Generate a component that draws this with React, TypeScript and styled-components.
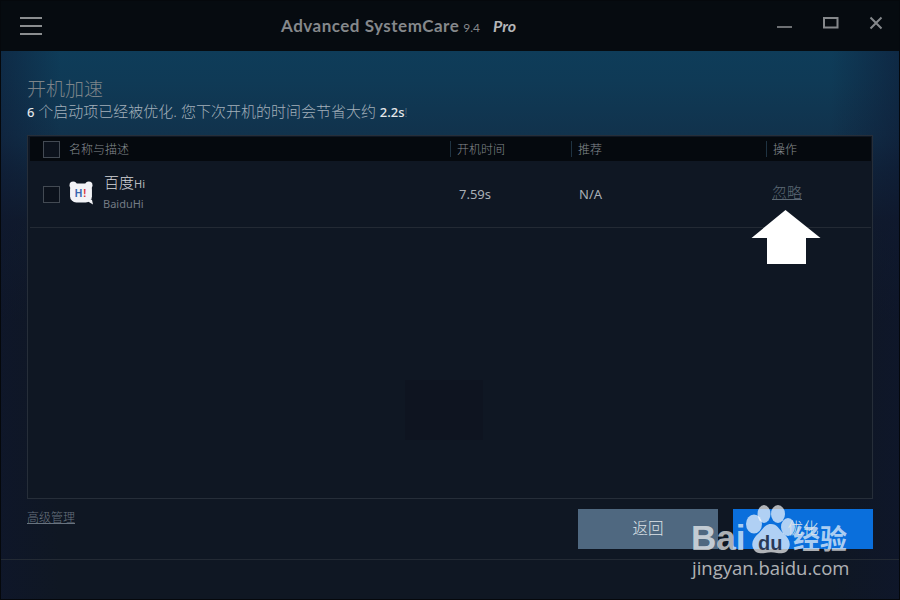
import React, { FC } from 'react';
import styled, { createGlobalStyle } from 'styled-components';

const FONT = '"Noto Sans", "Noto Sans CJK SC", sans-serif';

const GlobalStyle = createGlobalStyle`
  html, body {
    margin: 0;
    padding: 0;
    background: #05080c;
  }
  body {
    font-family: ${FONT};
  }
`;

const Window = styled.div`
  position: relative;
  width: 900px;
  height: 600px;
  box-sizing: border-box;
  border: 1px solid #05080c;
  overflow: hidden;
  display: flex;
  flex-direction: column;
  background:
    linear-gradient(
      90deg,
      rgba(14, 22, 48, 0.45) 0,
      rgba(14, 22, 48, 0) 60px,
      rgba(14, 22, 48, 0) 830px,
      rgba(14, 22, 48, 0.5) 100%
    ),
    linear-gradient(
      180deg,
      #0e3c59 50px,
      #0f3a56 80px,
      #11324c 135px,
      #10263c 170px,
      #101b2b 220px,
      #0f1723 320px
    );
`;

const TitleBar = styled.header`
  height: 50px;
  flex: none;
  background: #060b10;
  display: flex;
  align-items: center;
  padding: 0 16px 0 19px;
`;

const Menu = styled.div`
  width: 22px;
  display: flex;
  flex-direction: column;
  gap: 6px;
  margin-right: 239px;
  margin-top: -1px;

  span {
    display: block;
    height: 2px;
    background: #8b8e90;
  }
`;

const AppName = styled.div`
  flex: 1;
  display: flex;
  align-items: baseline;
  color: #85888b;
  font-family: Lato, ${FONT};
  font-size: 17px;
  font-weight: 700;
  letter-spacing: 0.5px;
  margin-top: -2px;
`;

const Version = styled.span`
  font-size: 12px;
  font-weight: 400;
  margin-left: 4px;
  letter-spacing: 0;
`;

const Edition = styled.span`
  color: #b4b6b8;
  font-size: 16px;
  font-style: italic;
  margin-left: 13px;
  letter-spacing: 0;
`;

const Controls = styled.div`
  display: flex;
  align-items: center;
  gap: 30px;
  margin-top: -7px;
`;

const Body = styled.main`
  flex: 1;
  display: flex;
  flex-direction: column;
  padding: 25px 26px 0;
  min-height: 0;
`;

const Heading = styled.h1`
  margin: 0;
  color: #7d8489;
  font-size: 19px;
  line-height: 26px;
  font-weight: 300;
`;

const Summary = styled.p`
  margin: -1px 0 12px;
  color: #a3b0ba;
  font-size: 15px;
  line-height: 20px;
  font-weight: 300;

  b {
    color: #e6e8ea;
    font-size: 13px;
    font-weight: 500;
  }

  i {
    color: #5f7a8e;
    font-style: normal;
    font-size: 12px;
  }
`;

const Panel = styled.section`
  position: relative;
  height: 364px;
  box-sizing: border-box;
  border: 1px solid #262e39;
  flex: none;
  background: #0f1723;
`;

const columns = '39px 381px 121px 195px 1fr';

const HeaderRow = styled.div`
  margin: 1px 1px 0 2px;
  height: 24px;
  display: grid;
  grid-template-columns: ${columns};
  align-items: center;
  background: #05090e;
  color: #858b90;
  font-size: 12px;
  font-weight: 300;
`;

const HeaderCell = styled.div<{ $divider?: boolean }>`
  padding-left: ${({ $divider }) => ($divider ? '6px' : '0')};
  padding-top: 1px;
  line-height: 15px;
  border-left: ${({ $divider }) => ($divider ? '1px solid #1f3342' : 'none')};
`;

const Check = styled.span`
  display: block;
  margin-left: 13px;
  width: 15px;
  height: 15px;
  border: 1px solid #434a53;
  background: #0c121c;
`;

const Row = styled.div`
  margin: 0 1px 0 2px;
  height: 67px;
  box-sizing: border-box;
  display: grid;
  grid-template-columns: ${columns};
  align-items: center;
  border-bottom: 1px solid #232a34;
  color: #a9afb5;
  font-size: 13px;
`;

const NameCell = styled.div`
  display: flex;
  align-items: center;
  gap: 11px;

  svg {
    margin-top: -2px;
  }
`;

const NameText = styled.div`
  display: flex;
  flex-direction: column;
  gap: 2px;
  padding-bottom: 5px;
`;

const AppTitle = styled.div`
  color: #d4d6d9;
  font-size: 15px;
  line-height: 20px;
  font-weight: 300;

  small {
    font-size: 11px;
    font-weight: 400;
    color: #b5b9bd;
  }
`;

const AppSub = styled.div`
  color: #747b84;
  font-size: 11px;
  line-height: 15px;
  margin-left: -1px;
`;

const ValueCell = styled.div<{ $inset: number }>`
  padding-left: ${({ $inset }) => $inset}px;
`;

const Link = styled.a`
  color: #5c6874;
  text-decoration: underline;
  font-weight: 300;
  cursor: pointer;
`;

const IgnoreCell = styled.div`
  padding-left: 6px;
  padding-bottom: 5px;
  font-size: 15px;
  line-height: 20px;
`;

const FadedBlock = styled.div`
  position: absolute;
  left: 377px;
  top: 244px;
  width: 78px;
  height: 60px;
  background: #0e1420;
`;

const Footer = styled.div`
  display: flex;
  align-items: flex-start;
  justify-content: space-between;
  height: 60px;
  flex: none;
  padding-top: 10px;
  box-sizing: border-box;
`;

const AdvancedLink = styled(Link)`
  font-size: 12px;
  line-height: 15px;
  margin-top: 1px;
  color: #68737f;
`;

const Buttons = styled.div`
  display: flex;
  gap: 15px;
`;

const Button = styled.button<{ $primary?: boolean }>`
  width: 140px;
  height: 40px;
  border: none;
  padding: 0 0 3px;
  font-family: ${FONT};
  font-size: 15.500px;
  font-weight: 300;
  color: #dfe4e8;
  background: ${({ $primary }) => ($primary ? '#0a6fdc' : '#4f6880')};
`;

const ButtonLabel = styled.span`
  position: relative;
  z-index: 2;
`;

const StatusBar = styled.footer`
  height: 40px;
  flex: none;
  box-sizing: border-box;
  border-top: 1px solid #232a34;
`;

const Arrow = styled.svg`
  position: absolute;
  left: 750px;
  top: 208px;
`;

const Watermark = styled.div`
  position: absolute;
  left: 690px;
  top: 503px;
  width: 170px;
  height: 80px;
  pointer-events: none;
  color: rgba(255, 255, 255, 0.68);
`;

const WatermarkBrand = styled.span`
  position: absolute;
  left: 0;
  top: 14px;
  font-family: "Liberation Sans", sans-serif;
  font-size: 35px;
  font-weight: 700;
  line-height: 40px;
`;

const WatermarkDu = styled.span`
  position: absolute;
  left: 67px;
  top: 26px;
  color: rgba(16, 30, 60, 0.85);
  font-family: "Liberation Sans", sans-serif;
  font-size: 20px;
  font-weight: 700;
  line-height: 26px;
`;

const WatermarkProduct = styled.span`
  position: absolute;
  left: 102px;
  top: 18px;
  font-size: 27px;
  font-weight: 700;
  line-height: 34px;
  white-space: nowrap;
`;

const WatermarkUrl = styled.span`
  position: absolute;
  left: 1px;
  top: 52px;
  font-family: "Open Sans", sans-serif;
  font-size: 18.500px;
  font-weight: 500;
  line-height: 24px;
  white-space: nowrap;
`;

const Paw = styled.svg`
  position: absolute;
  left: 55px;
  top: 0;
`;

const BaiduHiIcon: FC = () => (
  <svg width="24" height="24" viewBox="1.500 1 23 23">
    <g fill="#f2f3f7">
      <circle cx="5.500" cy="5" r="3.500" />
      <circle cx="20.500" cy="5" r="3.500" />
      <rect x="2.500" y="3.500" width="21" height="18" rx="6" />
      <path d="M17 19h6.500l1 4.500Z" />
    </g>
    <text x="7" y="16" fontFamily="Liberation Sans" fontSize="10" fontWeight="700" fill="#3a66b0">
      H
    </text>
    <text x="15" y="16" fontFamily="Liberation Sans" fontSize="10" fontWeight="700" fill="#d9353f">
      !
    </text>
  </svg>
);

const App: FC = () => (
  <>
    <GlobalStyle />
    <Window>
      <TitleBar>
        <Menu>
          <span />
          <span />
          <span />
        </Menu>
        <AppName>
          Advanced SystemCare
          <Version>9.4</Version>
          <Edition>Pro</Edition>
        </AppName>
        <Controls>
          <svg width="16" height="16" viewBox="0 0 16 16">
            <path d="M0 12h15" stroke="#6d7073" strokeWidth="2" />
          </svg>
          <svg width="16" height="12" viewBox="0 0 16 12">
            <path d="M1 1h13.500v9.500H1Z" fill="none" stroke="#85888b" strokeWidth="2" />
          </svg>
          <svg width="14" height="14" viewBox="0 0 14 14">
            <path d="M1.500 1.500l11 11M12.500 1.500l-11 11" stroke="#85888b" strokeWidth="2" />
          </svg>
        </Controls>
      </TitleBar>
      <Body>
        <Heading>开机加速</Heading>
        <Summary>
          <b>6</b> 个启动项已经被优化. 您下次开机的时间会节省大约 <b>2.2s</b>
          <i>!</i>
        </Summary>
        <Panel>
          <HeaderRow>
            <Check />
            <HeaderCell>名称与描述</HeaderCell>
            <HeaderCell $divider>开机时间</HeaderCell>
            <HeaderCell $divider>推荐</HeaderCell>
            <HeaderCell $divider>操作</HeaderCell>
          </HeaderRow>
          <Row>
            <Check />
            <NameCell>
              <BaiduHiIcon />
              <NameText>
                <AppTitle>
                  百度<small>Hi</small>
                </AppTitle>
                <AppSub>BaiduHi</AppSub>
              </NameText>
            </NameCell>
            <ValueCell $inset={9}>7.59s</ValueCell>
            <ValueCell $inset={8}>N/A</ValueCell>
            <IgnoreCell>
              <Link>忽略</Link>
            </IgnoreCell>
          </Row>
          <FadedBlock />
        </Panel>
        <Footer>
          <AdvancedLink>高级管理</AdvancedLink>
          <Buttons>
            <Button>返回</Button>
            <Button $primary>
              <ButtonLabel>优化</ButtonLabel>
            </Button>
          </Buttons>
        </Footer>
      </Body>
      <StatusBar />
      <Arrow width="70" height="56" viewBox="0 0 70 56">
        <path d="M34.500 1 69.500 29H55V55H16V29H.5Z" fill="#fff" />
      </Arrow>
      <Watermark>
        <Paw width="60" height="55" viewBox="0 0 60 55">
          <g fill="rgba(255,255,255,0.68)">
            <ellipse cx="8" cy="20" rx="8" ry="9.500" />
            <ellipse cx="18" cy="10" rx="6.500" ry="9" />
            <ellipse cx="32" cy="10" rx="7" ry="9" />
            <ellipse cx="42" cy="23" rx="7" ry="9" />
          </g>
          <path
            d="M25 20c6 0 8 5 12 9 6 5 8 10 6 15-2 5-7 6-12 5-4-1-8-1-12 0-5 1-10 0-12-5-2-5 0-10 6-15 4-4 6-9 12-9Z"
            fill="rgba(255,255,255,0.68)"
          />
        </Paw>
        <WatermarkBrand>Bai</WatermarkBrand>
        <WatermarkDu>du</WatermarkDu>
        <WatermarkProduct>经验</WatermarkProduct>
        <WatermarkUrl>jingyan.baidu.com</WatermarkUrl>
      </Watermark>
    </Window>
  </>
);

export default App;
